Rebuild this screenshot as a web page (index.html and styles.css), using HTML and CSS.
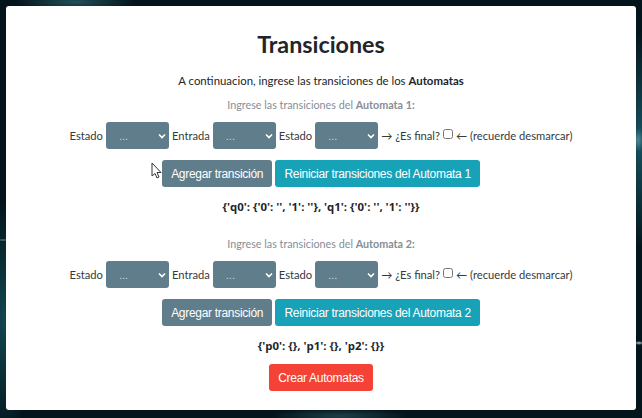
FILE: index.html
```html
<!DOCTYPE html>
<html lang="es">
<head>
    <meta charset="UTF-8">
    <meta name="viewport" content="width=device-width, initial-scale=1.0">
    <title>Transiciones</title>
    <link rel="stylesheet" href="styles.css">
</head>
<body>
    <svg class="cursor" width="12" height="18" viewBox="0 0 12 18">
        <path d="M1 1 L1 14 L4 11.5 L6 16 L8 15 L6 10.5 L10 10.5 Z" fill="#fff" stroke="#333" stroke-width="1"/>
    </svg>
    <main class="card">
        <h1>Transiciones</h1>
        <p class="intro">A continuacion, ingrese las transiciones de los <b>Automatas</b></p>

        <section class="automata">
            <p class="hint">Ingrese las transiciones del <b>Automata 1:</b></p>
            <div class="row">
                <span>Estado</span>
                <select class="pick"><option>...</option></select>
                <span>Entrada</span>
                <select class="pick"><option>...</option></select>
                <span>Estado</span>
                <select class="pick"><option>...</option></select>
                <span>&rarr; ¿Es final?</span>
                <input type="checkbox" class="check">
                <span>&larr; (recuerde desmarcar)</span>
            </div>
            <div class="actions">
                <button class="btn gray">Agregar transición</button>
                <button class="btn teal">Reiniciar transiciones del Automata 1</button>
            </div>
            <p class="dict">{'q0': {'0': '', '1': ''}, 'q1': {'0': '', '1': ''}}</p>
        </section>

        <section class="automata">
            <p class="hint">Ingrese las transiciones del <b>Automata 2:</b></p>
            <div class="row">
                <span>Estado</span>
                <select class="pick"><option>...</option></select>
                <span>Entrada</span>
                <select class="pick"><option>...</option></select>
                <span>Estado</span>
                <select class="pick"><option>...</option></select>
                <span>&rarr; ¿Es final?</span>
                <input type="checkbox" class="check">
                <span>&larr; (recuerde desmarcar)</span>
            </div>
            <div class="actions">
                <button class="btn gray">Agregar transición</button>
                <button class="btn teal">Reiniciar transiciones del Automata 2</button>
            </div>
            <p class="dict">{'p0': {}, 'p1': {}, 'p2': {}}</p>
        </section>

        <button class="btn red">Crear Automatas</button>
    </main>
</body>
</html>
```

FILE: styles.css
```css
html, body {
    height: 100%;
}

body {
    margin: 0;
    padding: 6px 6px 8px;
    box-sizing: border-box;
    font-family: Lato, "Open Sans", sans-serif;
    font-size: 11.4px;
    color: #212529;
    background-color: #03141a;
    background-image:
        radial-gradient(ellipse 8px 1px at 3px 240px, #6f8f96, transparent),
        radial-gradient(ellipse 5px 2px at 639px 343px, #b5c8cc, transparent),
        radial-gradient(ellipse 6px 12px at 638px 140px, #4f8590, transparent),
        radial-gradient(ellipse 30px 120px at 4px 320px, #124651, transparent),
        radial-gradient(ellipse 20px 110px at 640px 140px, #165260, transparent),
        radial-gradient(ellipse 60px 10px at 75px 2px, #24505a, transparent),
        radial-gradient(ellipse 70px 8px at 340px 416px, #1d3f48, transparent);
    overflow: hidden;
}

.cursor {
    position: absolute;
    left: 151px;
    top: 162px;
}

.card {
    background: #fff;
    border-radius: 3px;
    height: 404px;
    text-align: center;
    overflow: hidden;
}

h1 {
    margin: 0;
    padding-top: 24px;
    font-size: 23.3px;
    line-height: 28px;
    font-weight: 700;
}

p {
    margin: 0;
}

.intro {
    margin-top: 14px;
    line-height: 18px;
}

.automata {
    margin-bottom: 9px;
}

.hint {
    margin-top: 7px;
    font-size: 10.75px;
    line-height: 16px;
    color: #868e96;
}

.automata + .automata .hint {
    margin-top: 20px;
}

.row {
    display: flex;
    justify-content: center;
    align-items: center;
    gap: 3px;
    margin-top: 9px;
    height: 27px;
    font-size: 11.2px;
    color: #343a40;
}

.pick {
    appearance: none;
    width: 63px;
    height: 27px;
    padding: 0 0 0 13px;
    border: 0;
    border-radius: 3px;
    color: #cfd8dc;
    font: 11px "Liberation Sans", sans-serif;
    background-color: #607d8b;
    background-image: url("data:image/svg+xml,%3Csvg xmlns='http://www.w3.org/2000/svg' width='8' height='6'%3E%3Cpath d='M1 1.5 L4 4.5 L7 1.5' fill='none' stroke='white' stroke-width='1.6'/%3E%3C/svg%3E");
    background-repeat: no-repeat;
    background-position: right 3px center;
}

.check {
    margin: 0 0 3px;
    width: 10px;
    height: 10px;
}

.actions {
    display: flex;
    justify-content: center;
    gap: 3px;
    margin-top: 11px;
}

.btn {
    height: 27px;
    padding: 0 9.2px;
    border: 0;
    border-radius: 3px;
    color: #fff;
    font: 12px "Liberation Sans", sans-serif;
    letter-spacing: -0.3px;
    white-space: nowrap;
}

.gray {
    background: #607d8b;
}

.teal {
    background: #17a2b8;
}

.red {
    background: #f44336;
    width: 104px;
}

.dict {
    margin-top: 11px;
    line-height: 18px;
    font-family: "Open Sans", sans-serif;
    font-size: 11.4px;
    font-weight: 700;
}
```
